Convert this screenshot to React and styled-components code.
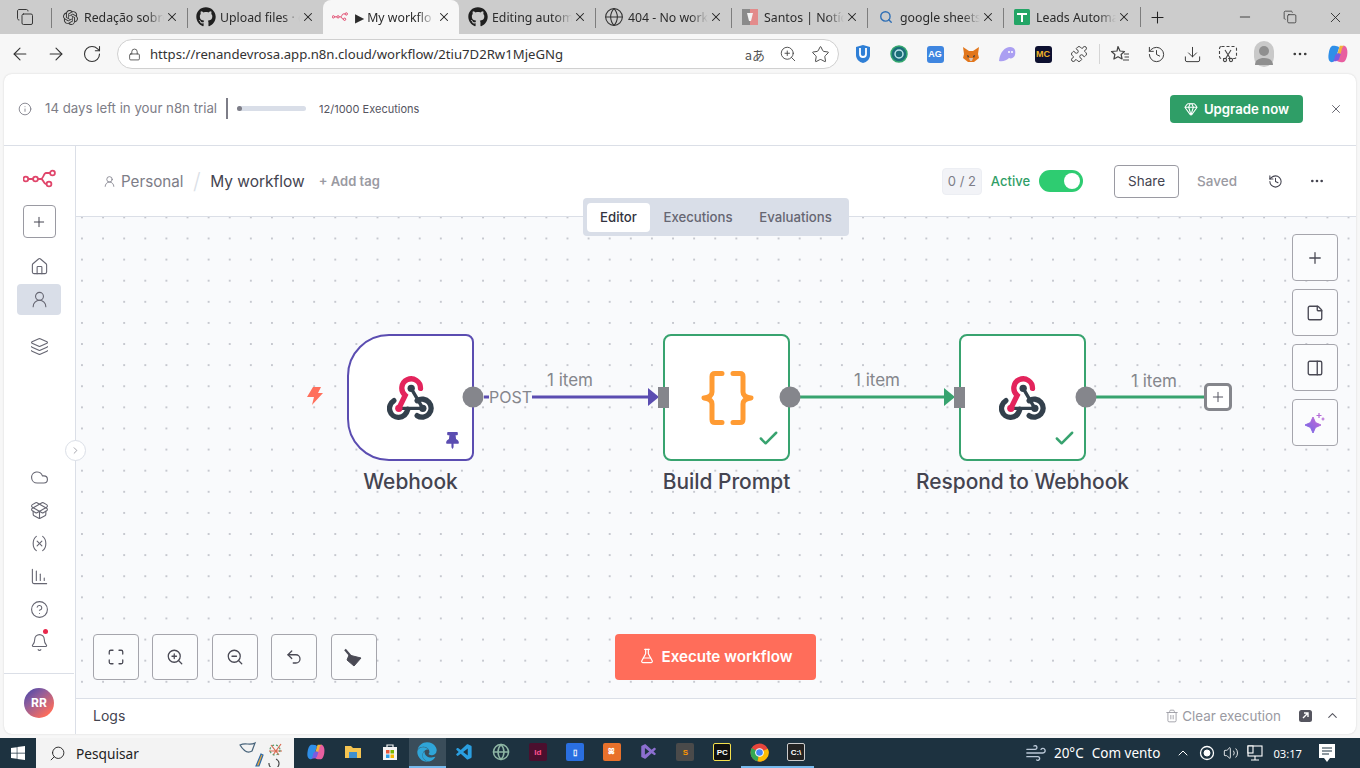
import styled, { createGlobalStyle } from 'styled-components';
import {
  ArrowLeft,
  ArrowRight,
  Bell,
  ChartColumnDecreasing,
  Check,
  ChevronRight,
  ChevronUp,
  CircleHelp,
  Cloud,
  Copy,
  Download,
  Ellipsis,
  FlaskConical,
  Gem,
  Globe,
  History,
  House,
  Info,
  Layers,
  Lock,
  Maximize,
  Minus,
  PackageOpen,
  PanelRight,
  Plus,
  Puzzle,
  RotateCw,
  Search,
  Star,
  StickyNote,
  Trash2,
  Undo2,
  UserRound,
  Variable,
  Volume2,
  Wind,
  X,
  ZoomIn,
  ZoomOut,
} from 'lucide-react';
import { FaEdge, FaGithub, FaThumbtack, FaWindows } from 'react-icons/fa';
import { SiOpenai } from 'react-icons/si';
import { VscVscode } from 'react-icons/vsc';

const GlobalStyle = createGlobalStyle`
  * {
    box-sizing: border-box;
  }

  html,
  body {
    margin: 0;
    padding: 0;
    overflow: hidden;
    background: #f7f7f7;
    font-family: Inter, "Liberation Sans", sans-serif;
  }
`;

const Screen = styled.div`
  width: 1360px;
  height: 768px;
  display: flex;
  flex-direction: column;
  overflow: hidden;
`;

/* browser chrome */

const TabStrip = styled.div`
  height: 34px;
  display: flex;
  align-items: stretch;
  background: #cccccc;
  font-family: 'Noto Sans', sans-serif;
  font-size: 12.3px;
  color: #2b2b2b;
`;

const WorkspaceCell = styled.div`
  width: 51px;
  display: flex;
  align-items: center;
  padding-left: 16px;
`;

const TabItem = styled.div`
  width: 136px;
  display: flex;
  align-items: center;
  padding-left: ${(p) => (p.$active ? '7px' : '9px')};
  position: relative;
  background: ${(p) => (p.$active ? '#f7f7f7' : 'transparent')};
  border-radius: ${(p) => (p.$active ? '8px 8px 0 0' : '0')};

  &::before {
    content: '';
    display: ${(p) => (p.$sep ? 'block' : 'none')};
    position: absolute;
    left: 0;
    top: 8px;
    height: 20px;
    width: 1px;
    background: #7d7d7d;
  }
`;

const TabFavicon = styled.span`
  width: 20px;
  height: 20px;
  flex: none;
  display: flex;
  align-items: center;
  justify-content: center;
`;

const TabTitle = styled.span`
  width: 80px;
  margin-left: ${(p) => (p.$active ? '5px' : '4px')};
  white-space: nowrap;
  mask-image: linear-gradient(to right, #000 78%, transparent 100%);
`;

const TabClose = styled.span`
  position: absolute;
  right: 8px;
  top: 10px;
  display: flex;
`;

const StripTail = styled.div`
  flex: 1;
  display: flex;
  align-items: center;
`;

const NewTab = styled.span`
  margin-left: 1px;
  padding-left: 7px;
  border-left: 1px solid #7d7d7d;
  height: 20px;
  display: flex;
  align-items: center;
`;

const WindowButtons = styled.div`
  margin-left: auto;
  display: flex;
  align-items: center;
  gap: 30px;
  padding-right: 16px;
`;

const AddressRow = styled.div`
  height: 40px;
  display: flex;
  align-items: center;
  background: #f7f7f7;
  padding-left: 10px;
`;

const NavIcons = styled.div`
  display: flex;
  gap: 16px;
`;

const UrlPill = styled.div`
  width: 722px;
  height: 30px;
  margin-left: 15px;
  display: flex;
  align-items: center;
  padding: 0 8px 0 10px;
  background: #ffffff;
  border: 1px solid #d0d0d0;
  border-radius: 15px;
  font-family: 'Noto Sans', sans-serif;
  font-size: 13.15px;
  color: #333333;
`;

const UrlText = styled.span`
  margin-left: 9px;
`;

const PillIcons = styled.div`
  margin-left: auto;
  display: flex;
  align-items: center;
  gap: 14px;
  color: #444444;
`;

const TranslateMark = styled.span`
  font-family: 'Noto Sans CJK JP', sans-serif;
  font-size: 13px;
  color: #555555;
`;

const ExtensionRow = styled.div`
  margin-left: 14px;
  display: flex;
  align-items: center;
  gap: 16px;
`;

const ExtSlot = styled.span`
  width: 20px;
  height: 20px;
  margin-left: ${(p) => p.$gap || 0}px;
  display: flex;
  align-items: center;
  justify-content: center;
`;

const ExtBadge = styled.span`
  width: 17px;
  height: 17px;
  display: flex;
  align-items: center;
  justify-content: center;
  border-radius: 3px;
  background: ${(p) => p.$bg};
  color: ${(p) => p.$fg};
  font-family: 'Liberation Sans', sans-serif;
  font-size: 9px;
  font-weight: 700;
`;

const ToolDivider = styled.span`
  width: 1px;
  height: 20px;
  background: #d5d5d5;
  margin: 0 -6px;
`;

const ProfileAvatar = styled.span`
  width: 22px;
  height: 26px;
  border-radius: 11px;
  background: #c9c9c9;
  display: flex;
  align-items: center;
  justify-content: center;
`;

/* n8n frame */

const Frame = styled.div`
  flex: 1;
  min-height: 0;
  margin: 0 4px 4px;
  display: flex;
  flex-direction: column;
  background: #ffffff;
  border-radius: 8px;
  overflow: hidden;
  box-shadow: 0 0 2px rgba(0, 0, 0, 0.16);
`;

const TrialBanner = styled.div`
  height: 72px;
  flex: none;
  display: flex;
  align-items: center;
  padding: 0 13px 2px 14px;
  border-bottom: 1px solid #dbdfe7;
  color: #7d7d87;
`;

const TrialText = styled.span`
  margin-left: 13px;
  padding-bottom: 2px;
  font-size: 13.25px;
`;

const TrialDivider = styled.span`
  width: 2px;
  height: 21px;
  margin: 0 9px;
  background: #7d7d87;
`;

const ProgressTrack = styled.div`
  width: 69px;
  height: 5px;
  border-radius: 3px;
  background: #d9dee8;
`;

const ProgressFill = styled.div`
  height: 100%;
  border-radius: 3px;
  background: #7d7d87;
`;

const ExecCount = styled.span`
  margin-left: 13px;
  font-size: 11px;
  color: #55555f;
`;

const UpgradeButton = styled.button`
  margin-left: auto;
  width: 133px;
  height: 28px;
  display: flex;
  align-items: center;
  justify-content: center;
  gap: 6px;
  border: none;
  border-radius: 4px;
  background: #2f9e67;
  color: #ffffff;
  font: 600 13.2px Inter, sans-serif;
`;

const BannerClose = styled.span`
  margin-left: 26px;
  display: flex;
  color: #55555f;
`;

const Workspace = styled.div`
  flex: 1;
  min-height: 0;
  display: flex;
`;

const Sidebar = styled.aside`
  width: 72px;
  flex: none;
  position: relative;
  display: flex;
  flex-direction: column;
  align-items: center;
  padding: 21px 1px 0 0;
  border-right: 1px solid #dbdfe7;
  color: #666672;
`;

const LogoSlot = styled.div`
  height: 24px;
  display: flex;
  align-items: center;
`;

const AddButton = styled.button`
  width: 33px;
  height: 33px;
  margin: 14px 0 12px;
  display: flex;
  align-items: center;
  justify-content: center;
  background: #ffffff;
  border: 1px solid #9a9aa2;
  border-radius: 4px;
  color: #444450;
  padding: 0;
`;

const NavItem = styled.div`
  width: 44px;
  height: ${(p) => (p.$active ? '31px' : '33px')};
  margin-top: ${(p) => p.$gap || 0}px;
  display: flex;
  align-items: center;
  justify-content: center;
  position: relative;
  border-radius: 4px;
  background: ${(p) => (p.$active ? '#d9dee8' : 'transparent')};
`;

const NotifyDot = styled.span`
  position: absolute;
  top: 3px;
  right: 13px;
  width: 5px;
  height: 5px;
  border-radius: 50%;
  background: #e8274b;
`;

const CollapseToggle = styled.span`
  position: absolute;
  top: 294px;
  right: -11px;
  width: 21px;
  height: 21px;
  z-index: 3;
  display: flex;
  align-items: center;
  justify-content: center;
  border-radius: 50%;
  border: 1px solid #dbdfe7;
  background: #ffffff;
  color: #7d7d87;
`;

const SideLower = styled.div`
  margin-top: auto;
  width: 100%;
  display: flex;
  flex-direction: column;
  align-items: center;
`;

const AvatarBlock = styled.div`
  width: 100%;
  height: 61px;
  margin-top: 14px;
  display: flex;
  align-items: center;
  justify-content: center;
  padding-bottom: 3px;
  border-top: 1px solid #dbdfe7;
`;

const UserAvatar = styled.span`
  width: 30px;
  height: 30px;
  border-radius: 50%;
  display: flex;
  align-items: center;
  justify-content: center;
  background: linear-gradient(140deg, #4b46a8 5%, #8e5d9c 35%, #ff6d5a 85%);
  color: #ffffff;
  font-size: 12px;
  font-weight: 700;
`;

const Main = styled.div`
  flex: 1;
  min-width: 0;
  position: relative;
  display: flex;
  flex-direction: column;
`;

const HeaderBar = styled.header`
  height: 71px;
  flex: none;
  display: flex;
  align-items: center;
  padding: 0 31px 0 27px;
  border-bottom: 1px solid #dbdfe7;
`;

const ProjectLink = styled.span`
  display: flex;
  align-items: center;
  gap: 5px;
  font-size: 15.2px;
  color: #7d7d87;
`;

const CrumbSlash = styled.span`
  margin: 0 9.5px;
  font-size: 22px;
  font-weight: 300;
  color: #dbdfe7;
`;

const WorkflowName = styled.span`
  font-size: 15.5px;
  color: #444450;
`;

const AddTag = styled.span`
  margin-left: 14px;
  font-size: 13px;
  font-weight: 600;
  color: #9a9aa2;
`;

const HeaderRight = styled.div`
  margin-left: auto;
  display: flex;
  align-items: center;
`;

const Counter = styled.span`
  width: 40px;
  height: 27px;
  display: flex;
  align-items: center;
  justify-content: center;
  border: 1px solid #eceef3;
  border-radius: 4px;
  background: #f2f3f7;
  font-size: 13px;
  color: #7d7d87;
`;

const ActiveLabel = styled.span`
  margin-left: 9px;
  font-size: 13px;
  font-weight: 500;
  color: #2f9e67;
`;

const Toggle = styled.span`
  width: 44px;
  height: 22px;
  margin-left: 9px;
  display: flex;
  align-items: center;
  justify-content: flex-end;
  padding-right: 3px;
  border-radius: 11px;
  background: #2ecc71;

  &::after {
    content: '';
    width: 16px;
    height: 16px;
    border-radius: 50%;
    background: #ffffff;
  }
`;

const ShareButton = styled.button`
  width: 65px;
  height: 33px;
  margin-left: 31px;
  background: #ffffff;
  border: 1px solid #9a9aa2;
  border-radius: 4px;
  font: 400 13.5px Inter, sans-serif;
  color: #444450;
  padding: 0;
`;

const SavedLabel = styled.span`
  margin-left: 18px;
  font-size: 13.5px;
  font-weight: 500;
  color: #9a9aa2;
`;

const HeaderIcon = styled.span`
  margin-left: ${(p) => p.$gap}px;
  display: flex;
  color: #444450;
`;

const ViewTabs = styled.nav`
  position: absolute;
  top: 52px;
  left: 507px;
  width: 266px;
  height: 38px;
  z-index: 3;
  display: flex;
  align-items: center;
  padding: 0 4px;
  border-radius: 4px;
  background: #d9dee8;
  font-size: 13.2px;
  font-weight: 500;
  color: #666672;
`;

const ViewTab = styled.span`
  height: 29px;
  width: ${(p) => p.$w}px;
  display: flex;
  align-items: center;
  justify-content: center;
  border-radius: 4px;
  background: ${(p) => (p.$active ? '#ffffff' : 'transparent')};
  color: ${(p) => (p.$active ? '#333340' : 'inherit')};
`;

const Canvas = styled.section`
  flex: 1;
  min-height: 0;
  position: relative;
  background-color: #f9fafc;
  background-image: radial-gradient(circle, #c6c8cf 0.7px, transparent 1px);
  background-size: 21.12px 21.12px;
  background-position: -4.6px -10.2px;
`;

const EdgeLayer = styled.svg`
  position: absolute;
  inset: 0;
  z-index: 2;
  pointer-events: none;
`;

const NodeBox = styled.div`
  position: absolute;
  left: ${(p) => p.$x}px;
  top: 117px;
  width: 127px;
  height: 127px;
  display: flex;
  align-items: center;
  justify-content: center;
  background: #ffffff;
  border: 2px solid ${(p) => p.$color};
  border-radius: ${(p) => (p.$trigger ? '42px 8px 8px 42px' : '8px')};
`;

const NodeLabel = styled.span`
  position: absolute;
  top: 133px;
  left: 50%;
  transform: translateX(-50%);
  white-space: nowrap;
  font-size: 20.9px;
  font-weight: 500;
  color: #444450;
`;

const NodeStatus = styled.span`
  position: absolute;
  right: ${(p) => p.$right}px;
  bottom: ${(p) => p.$bottom}px;
  display: flex;
  color: ${(p) => p.$color};
`;

const BoltMark = styled.span`
  position: absolute;
  left: 229px;
  top: 169px;
  display: flex;
`;

const EdgeLabel = styled.span`
  position: absolute;
  left: ${(p) => p.$x}px;
  top: ${(p) => p.$y}px;
  z-index: 2;
  font-size: ${(p) => p.$size}px;
  color: #85868c;
  line-height: 20px;
`;

const PlusHandle = styled.span`
  position: absolute;
  left: 1128px;
  top: 166px;
  z-index: 3;
  width: 28px;
  height: 28px;
  display: flex;
  align-items: center;
  justify-content: center;
  background: #ffffff;
  border: 3px solid #85868c;
  border-radius: 5px;
  color: #555560;
`;

const SideTools = styled.div`
  position: absolute;
  top: 17px;
  right: 18px;
  z-index: 3;
  display: flex;
  flex-direction: column;
  gap: 8px;
`;

const BottomTools = styled.div`
  position: absolute;
  left: 17px;
  bottom: 18px;
  z-index: 3;
  display: flex;
  gap: 13.4px;
`;

const ToolButton = styled.button`
  width: 46px;
  height: 46px;
  padding: 0;
  display: flex;
  align-items: center;
  justify-content: center;
  background: #fbfcfd;
  border: 1px solid #a5a5ac;
  border-radius: 4px;
  color: #4a4a55;
`;

const SideButton = styled(ToolButton)`
  height: 47px;
`;

const ExecuteButton = styled.button`
  position: absolute;
  left: 539px;
  bottom: 18px;
  z-index: 3;
  width: 201px;
  height: 46px;
  display: flex;
  align-items: center;
  justify-content: center;
  gap: 7px;
  padding: 0 0 2px;
  border: none;
  border-radius: 4px;
  background: #ff6d5a;
  color: #ffffff;
  font: 600 15.2px Inter, sans-serif;
`;

const LogsBar = styled.footer`
  height: 36px;
  flex: none;
  display: flex;
  align-items: center;
  padding: 0 16px 2px 17px;
  border-top: 1px solid #dbdfe7;
  font-size: 14px;
  color: #444450;
`;

const ClearExec = styled.span`
  margin-left: auto;
  display: flex;
  align-items: center;
  gap: 3px;
  font-size: 13.4px;
  color: #9a9aa2;
`;

const LogsIcon = styled.span`
  margin-left: ${(p) => p.$gap}px;
  display: flex;
  color: #55555f;
`;

/* windows taskbar */

const Taskbar = styled.div`
  height: 30px;
  flex: none;
  display: flex;
  align-items: center;
  background: #1d3240;
  font-family: 'Noto Sans', sans-serif;
  color: #ffffff;
`;

const StartCell = styled.div`
  width: 36px;
  display: flex;
  justify-content: center;
`;

const SearchBox = styled.div`
  width: 258px;
  height: 30px;
  display: flex;
  align-items: center;
  gap: 10px;
  padding-left: 13px;
  background: #f3f3f3;
  color: #222222;
  font-size: 13.7px;
`;

const SearchDoodle = styled.span`
  margin-left: auto;
  padding-right: 5px;
  display: flex;
`;

const TaskIcons = styled.div`
  margin-left: 4px;
  display: flex;
`;

const TaskSlot = styled.span`
  width: 36.9px;
  height: 30px;
  display: flex;
  align-items: center;
  justify-content: center;
  background: ${(p) => (p.$active ? '#3a4d5a' : 'transparent')};
  border-bottom: 2px solid ${(p) => (p.$running ? '#76b9ed' : 'transparent')};
`;

const TaskBadge = styled.span`
  width: 18px;
  height: 18px;
  display: flex;
  align-items: center;
  justify-content: center;
  background: ${(p) => p.$bg};
  color: ${(p) => p.$fg};
  border: ${(p) => (p.$line ? `1px solid ${p.$line}` : 'none')};
  border-radius: 2px;
  font-family: 'Liberation Sans', sans-serif;
  font-size: 8px;
  font-weight: 700;
`;

const Tray = styled.div`
  margin-left: auto;
  display: flex;
  align-items: center;
  padding-right: 24px;
`;

const TrayText = styled.span`
  margin-left: ${(p) => p.$gap}px;
  font-size: ${(p) => p.$size || 13.5}px;
`;

const TrayIcon = styled.span`
  margin-left: ${(p) => p.$gap}px;
  display: flex;
`;

/* drawings */

function N8nLogo({ size = 33, color = '#e0466b', stroke = 1.8 }) {
  return (
    <svg width={size} height={(size * 20) / 33} viewBox="0 0 33 20" fill="none" stroke={color} strokeWidth={stroke}>
      <circle cx="2.800" cy="10" r="2.400" />
      <circle cx="12.500" cy="10" r="2.400" />
      <circle cx="29.500" cy="4" r="2.400" />
      <circle cx="26" cy="15" r="2.400" />
      <path d="M5.200 10h4.900M14.900 10h3.100c2.500 0 2.500-6 5-6h4.100M18 10c2.500 0 2.500 5 5 5h.6" />
    </svg>
  );
}

function WebhookLogo() {
  return (
    <svg width="47" height="45" viewBox="50 45 140 135" fill="none" strokeLinecap="round">
      <path d="M122 85L157 145H85" stroke="#33404c" strokeWidth="10" />
      <path d="M70 122A27 27 0 0 0 85 172C100 172 108 162 112 148" stroke="#33404c" strokeWidth="16" />
      <path d="M140 122A27 27 0 1 1 140 167" stroke="#33404c" strokeWidth="16" />
      <path d="M85 145L104 106A28 28 0 1 1 150 85" stroke="#e3245c" strokeWidth="16" />
      <circle cx="122" cy="85" r="11" fill="#33404c" />
      <circle cx="157" cy="145" r="11" fill="#33404c" />
      <circle cx="85" cy="145" r="11" fill="#e3245c" />
    </svg>
  );
}

function BracesLogo() {
  return (
    <svg width="54" height="54" viewBox="0 0 54 54" fill="none" stroke="#ff9b33" strokeWidth="5" strokeLinecap="round" strokeLinejoin="round">
      <path d="M22 2.500H15Q12 2.500 12 5.500V21Q12 26 4 27Q12 28 12 33V48.500Q12 51.500 15 51.500H22" />
      <path d="M33 2.500H40Q43 2.500 43 5.500V21Q43 26 51 27Q43 28 43 33V48.500Q43 51.500 40 51.500H33" />
    </svg>
  );
}

function Bolt() {
  return (
    <svg width="20" height="20" viewBox="0 0 20 20" fill="#ff6f5c">
      <path d="M8 1h8l-3 6h5L7 19l2-8H2z" />
    </svg>
  );
}

function Broom() {
  return (
    <svg width="19" height="19" viewBox="0 0 19 19" fill="#4a4a55" stroke="#4a4a55" strokeLinejoin="round">
      <path d="M1 1.500L7 8.500" strokeWidth="2.200" />
      <path d="M5 7l12 3-7 8-7-6z" strokeWidth="1" />
    </svg>
  );
}

function Sparkle() {
  return (
    <svg width="22" height="22" viewBox="0 0 22 22">
      <defs>
        <linearGradient id="sparkFill" x1="0" y1="1" x2="1" y2="0">
          <stop offset="0" stopColor="#6f67e8" />
          <stop offset="1" stopColor="#c86ad4" />
        </linearGradient>
      </defs>
      <path
        d="M9 5L11.500 10.500L17 13L11.500 15.500L9 21L6.500 15.500L1 13L6.500 10.500Z"
        fill="url(#sparkFill)"
        stroke="url(#sparkFill)"
        strokeLinejoin="round"
      />
      <path d="M15 1v5M12.500 3.500h5M19 5.500v3M17.500 7h3" stroke="#b56ad8" strokeWidth="1.200" />
    </svg>
  );
}

function PopOut() {
  return (
    <svg width="15" height="15" viewBox="0 0 15 15">
      <rect x="1" y="2" width="13" height="12" rx="2.500" fill="#55555f" />
      <path d="M5 10l5-5M6 5h4v4" fill="none" stroke="#ffffff" strokeWidth="1.400" />
    </svg>
  );
}

function CopilotMark({ size = 22 }) {
  return (
    <svg width={size} height={size} viewBox="0 0 22 22">
      <path d="M6 2c-3 0-4 3-5 7-1 5-1 10 3 11 3 0 4-3 5-6l3-9C13 3 10 2 6 2z" fill="#2f8fe8" />
      <path d="M16 20c3 0 4-3 5-7 1-5 0-10-3-11-3 0-4 3-5 6l-3 9c-1 2 2 3 6 3z" fill="#e85fa0" />
      <path d="M12 5l1-3h5c-2 1-3 3-3 5l-2 6-4 3z" fill="#f2b13d" />
      <path d="M8 12l3-2 3 1-2 6-3 2H5c2-1 2-3 3-7z" fill="#7b5be0" />
    </svg>
  );
}

function FoxMark() {
  return (
    <svg width="18" height="17" viewBox="0 0 18 17">
      <path d="M1 1l6 4h4l6-4-1 7 1 4-5 4H6l-5-4 1-4z" fill="#e2761b" />
      <path d="M5 9l2 1-1 2zM13 9l-2 1 1 2z" fill="#233447" />
      <path d="M7 12h4l-1 3H8z" fill="#d7c1b3" />
    </svg>
  );
}

function GhostMark() {
  return (
    <svg width="20" height="18" viewBox="0 0 20 18">
      <path d="M2 16C3 7 8 2 13 2s6 4 5 8c-1 3-4 4-6 3-2 2-6 4-10 3z" fill="#ab9ff2" />
      <circle cx="12" cy="7" r="1" fill="#ffffff" />
      <circle cx="15" cy="7" r="1" fill="#ffffff" />
    </svg>
  );
}

function ShieldMark() {
  return (
    <svg width="16" height="20" viewBox="0 0 16 20">
      <path d="M1 3l7-2 7 2v8c0 4-3 7-7 8-4-1-7-4-7-8z" fill="#2f7fd6" />
      <path d="M5 4v6c0 2 1 3 3 3s3-1 3-3V4" fill="none" stroke="#ffffff" strokeWidth="1.800" />
    </svg>
  );
}

function RingMark() {
  return (
    <svg width="18" height="20" viewBox="0 0 18 20">
      <circle cx="9" cy="10" r="8" fill="#1b6e78" stroke="#35a86f" strokeWidth="1.500" />
      <circle cx="9" cy="10" r="4" fill="none" stroke="#b9e3ea" strokeWidth="1.500" />
    </svg>
  );
}

function SheetsMark() {
  return (
    <svg width="16" height="16" viewBox="0 0 16 16">
      <rect width="16" height="16" rx="1.500" fill="#23a566" />
      <path d="M3 5h10M8 5v8" stroke="#ffffff" strokeWidth="2" />
    </svg>
  );
}

function SantosMark() {
  return (
    <svg width="16" height="16" viewBox="0 0 16 16">
      <rect width="8" height="16" fill="#8a8a8a" />
      <rect x="8" width="8" height="16" fill="#e38b8b" />
      <path d="M5 4h6l-2 8H7z" fill="#f3f3f3" />
    </svg>
  );
}

function ScreenshotTool() {
  return (
    <svg width="20" height="18" viewBox="0 0 20 18" fill="none" stroke="#444444" strokeWidth="1.100">
      <rect x="1.500" y="1.500" width="17" height="12" rx="2" strokeDasharray="3 2" />
      <path d="M7 5l5 8M13 5l-5 8" />
      <circle cx="7" cy="15" r="1.600" />
      <circle cx="13" cy="15" r="1.600" />
    </svg>
  );
}

function FavoritesIcon() {
  return (
    <svg width="20" height="20" viewBox="0 0 20 20" fill="none" stroke="#444444" strokeWidth="1.200" strokeLinejoin="round">
      <path d="M8 2.500l2 4.500 4.500.5-3.400 3 1 4.500L8 12.700 3.900 15l1-4.500-3.400-3L7 7z" />
      <path d="M14 10h5M14.500 13h4.500M13 16h6" />
    </svg>
  );
}

function PersonGlyph() {
  return (
    <svg width="20" height="24" viewBox="0 0 20 24" fill="#8f8f8f">
      <circle cx="10" cy="9" r="5" />
      <path d="M1 23c0-5 4-7 9-7s9 2 9 7z" />
    </svg>
  );
}

function Doodle() {
  return (
    <svg width="52" height="28" viewBox="0 0 52 28" fill="none" strokeWidth="1.200">
      <path d="M3 6c6-3 9 1 15-2l-3 8c-5 3-9-1-12-6z" stroke="#47637a" />
      <path d="M19 27l5-12 2 1-4 11z" fill="#e6a53a" stroke="#2f6aa8" />
      <path d="M34 6l8 10M44 5l-8 11M32 12h13" stroke="#d9694f" />
      <circle cx="38" cy="11" r="5" stroke="#5a9a6b" strokeDasharray="2 2" />
      <path d="M32 24a5 5 0 1 0 7-4" stroke="#444444" />
    </svg>
  );
}

function NotesGlyph() {
  return (
    <svg width="18" height="21" viewBox="0 0 18 21">
      <path d="M1 1h16v14h-5l-3 4-3-4H1z" fill="#ffffff" />
      <path d="M4 5h10M4 8h10M4 11h7" stroke="#1d3240" strokeWidth="1.200" />
    </svg>
  );
}

function FolderMark() {
  return (
    <svg width="18" height="16" viewBox="0 0 18 16">
      <path d="M1 2h6l2 2h8v10H1z" fill="#f5c451" />
      <path d="M5 8h8v6H5z" fill="#3f8fd0" />
    </svg>
  );
}

function StoreMark() {
  return (
    <svg width="16" height="18" viewBox="0 0 16 18">
      <path d="M1 4h14v13H1z" fill="#f4f4f4" />
      <path d="M5 4V2h6v2" fill="none" stroke="#f4f4f4" strokeWidth="1.200" />
      <rect x="4" y="7" width="3.500" height="3.500" fill="#e8563a" />
      <rect x="8.500" y="7" width="3.500" height="3.500" fill="#7ab800" />
      <rect x="4" y="11.500" width="3.500" height="3.500" fill="#2f9fe8" />
      <rect x="8.500" y="11.500" width="3.500" height="3.500" fill="#f5b900" />
    </svg>
  );
}

function ChromeMark() {
  return (
    <svg width="19" height="19" viewBox="0 0 20 20">
      <circle cx="10" cy="10" r="9.500" fill="#e8453c" />
      <path d="M10 10L1.800 5.200A9.500 9.500 0 0 0 8 19.300z" fill="#34a853" />
      <path d="M10 10l-2 9.300A9.500 9.500 0 0 0 18.800 6z" fill="#fbbc05" />
      <circle cx="10" cy="10" r="4.600" fill="#ffffff" />
      <circle cx="10" cy="10" r="3.500" fill="#4285f4" />
    </svg>
  );
}

const browserTabs = [
  { title: 'Redação sobre', favicon: <SiOpenai size={15} color="#333333" />, sep: true },
  { title: 'Upload files · c', favicon: <FaGithub size={20} color="#1f1f1f" />, sep: true },
  { title: '▶ My workflo', favicon: <N8nLogo size={16} stroke={2} />, active: true },
  { title: 'Editing autom', favicon: <FaGithub size={20} color="#1f1f1f" /> },
  { title: '404 - No work', favicon: <Globe size={20} strokeWidth={1.300} color="#333333" />, sep: true },
  { title: 'Santos | Notíci', favicon: <SantosMark />, sep: true },
  { title: 'google sheets', favicon: <Search size={14} strokeWidth={2.400} color="#2f6fb5" />, sep: true },
  { title: 'Leads Automa', favicon: <SheetsMark />, sep: true },
];

const navTop = [
  { icon: House, key: 'home' },
  { icon: UserRound, key: 'personal', active: true, gap: 1 },
  { icon: Layers, key: 'layers', gap: 15 },
];

const navBottom = [Cloud, PackageOpen, Variable, ChartColumnDecreasing, CircleHelp];

const edgeLines = [
  { d: 'M484 397H489M532 397H650', color: '#5b4db1', head: 'M648 388L659 397L648 406Z', inX: 658 },
  { d: 'M800 397H946', color: '#38a36f', head: 'M944 388L955 397L944 406Z', inX: 954 },
  { d: 'M1096 397H1206', color: '#38a36f' },
];

const taskItems = [
  { node: <CopilotMark size={18} /> },
  { node: <FolderMark /> },
  { node: <StoreMark /> },
  { node: <FaEdge size={20} color="#2fa5d8" />, active: true, running: true },
  { node: <VscVscode size={19} color="#2a9fe0" /> },
  { node: <Globe size={18} color="#8fb7a5" strokeWidth={2} /> },
  { node: <TaskBadge $bg="#4b0f2e" $fg="#ff4f8f">Id</TaskBadge> },
  { node: <TaskBadge $bg="#2a6fe0" $fg="#ffffff">▯</TaskBadge> },
  { node: <TaskBadge $bg="#e8712b" $fg="#ffffff">ꕤ</TaskBadge> },
  { node: <VscVscode size={18} color="#8c6fd0" style={{ transform: 'scaleX(-1)' }} /> },
  { node: <TaskBadge $bg="#4a4a4a" $fg="#ff9800">S</TaskBadge> },
  { node: <TaskBadge $bg="#111111" $fg="#ffffff" $line="#f4e04d">PC</TaskBadge> },
  { node: <ChromeMark />, running: true },
  { node: <TaskBadge $bg="#222222" $fg="#ffffff" $line="#cccccc">C:\</TaskBadge>, running: true },
];

export default function App() {
  return (
    <Screen>
      <GlobalStyle />

      <TabStrip>
        <WorkspaceCell>
          <Copy size={18} strokeWidth={1.300} color="#333333" />
        </WorkspaceCell>
        {browserTabs.map((tab) => (
          <TabItem key={tab.title} $active={tab.active} $sep={tab.sep}>
            <TabFavicon>{tab.favicon}</TabFavicon>
            <TabTitle $active={tab.active}>{tab.title}</TabTitle>
            <TabClose>
              <X size={14} strokeWidth={1.800} color="#222222" />
            </TabClose>
          </TabItem>
        ))}
        <StripTail>
          <NewTab>
            <Plus size={19} strokeWidth={1.300} color="#222222" />
          </NewTab>
          <WindowButtons>
            <Minus size={16} strokeWidth={1.200} color="#222222" />
            <Copy size={14} strokeWidth={1.200} color="#222222" />
            <X size={17} strokeWidth={1.200} color="#222222" />
          </WindowButtons>
        </StripTail>
      </TabStrip>

      <AddressRow>
        <NavIcons>
          <ArrowLeft size={20} strokeWidth={1.300} color="#333333" />
          <ArrowRight size={20} strokeWidth={1.300} color="#333333" />
          <RotateCw size={20} strokeWidth={1.300} color="#333333" />
        </NavIcons>
        <UrlPill>
          <Lock size={13} strokeWidth={1.400} color="#333333" />
          <UrlText>https://renandevrosa.app.n8n.cloud/workflow/2tiu7D2Rw1MjeGNg</UrlText>
          <PillIcons>
            <TranslateMark>aあ</TranslateMark>
            <ZoomIn size={18} strokeWidth={1.200} />
            <Star size={19} strokeWidth={1.200} />
          </PillIcons>
        </UrlPill>
        <ExtensionRow>
          <ExtSlot><ShieldMark /></ExtSlot>
          <ExtSlot><RingMark /></ExtSlot>
          <ExtSlot><ExtBadge $bg="#3f86e0" $fg="#ffffff">AG</ExtBadge></ExtSlot>
          <ExtSlot><FoxMark /></ExtSlot>
          <ExtSlot><GhostMark /></ExtSlot>
          <ExtSlot><ExtBadge $bg="#0d1030" $fg="#f0b429">MC</ExtBadge></ExtSlot>
          <ExtSlot><Puzzle size={18} strokeWidth={1.200} color="#333333" /></ExtSlot>
          <ToolDivider />
          <ExtSlot><FavoritesIcon /></ExtSlot>
          <ExtSlot><History size={19} strokeWidth={1.200} color="#333333" /></ExtSlot>
          <ExtSlot><Download size={19} strokeWidth={1.200} color="#333333" /></ExtSlot>
          <ExtSlot><ScreenshotTool /></ExtSlot>
          <ExtSlot><ProfileAvatar><PersonGlyph /></ProfileAvatar></ExtSlot>
          <ExtSlot><Ellipsis size={18} strokeWidth={1.500} color="#333333" /></ExtSlot>
          <ExtSlot $gap={2}><CopilotMark /></ExtSlot>
        </ExtensionRow>
      </AddressRow>

      <Frame>
        <TrialBanner>
          <Info size={14} strokeWidth={1.500} />
          <TrialText>14 days left in your n8n trial</TrialText>
          <TrialDivider />
          <ProgressTrack>
            <ProgressFill style={{ width: `${(12 / 1000) * 100 + 6}%` }} />
          </ProgressTrack>
          <ExecCount>12/1000 Executions</ExecCount>
          <UpgradeButton>
            <Gem size={14} strokeWidth={1.800} />
            Upgrade now
          </UpgradeButton>
          <BannerClose>
            <X size={14} strokeWidth={1.500} />
          </BannerClose>
        </TrialBanner>

        <Workspace>
          <Sidebar>
            <LogoSlot>
              <N8nLogo />
            </LogoSlot>
            <AddButton>
              <Plus size={16} strokeWidth={1.500} />
            </AddButton>
            {navTop.map(({ icon: Icon, key, active, gap }) => (
              <NavItem key={key} $active={active} $gap={gap}>
                <Icon size={19} strokeWidth={1.400} />
              </NavItem>
            ))}
            <CollapseToggle>
              <ChevronRight size={11} strokeWidth={1.500} />
            </CollapseToggle>
            <SideLower>
              {navBottom.map((Icon, i) => (
                <NavItem key={i}>
                  <Icon size={19} strokeWidth={1.400} />
                </NavItem>
              ))}
              <NavItem>
                <Bell size={19} strokeWidth={1.400} />
                <NotifyDot />
              </NavItem>
              <AvatarBlock>
                <UserAvatar>RR</UserAvatar>
              </AvatarBlock>
            </SideLower>
          </Sidebar>

          <Main>
            <HeaderBar>
              <ProjectLink>
                <UserRound size={13} strokeWidth={1.500} />
                Personal
              </ProjectLink>
              <CrumbSlash>/</CrumbSlash>
              <WorkflowName>My workflow</WorkflowName>
              <AddTag>+ Add tag</AddTag>
              <HeaderRight>
                <Counter>0 / 2</Counter>
                <ActiveLabel>Active</ActiveLabel>
                <Toggle />
                <ShareButton>Share</ShareButton>
                <SavedLabel>Saved</SavedLabel>
                <HeaderIcon $gap={31}>
                  <History size={15} strokeWidth={1.700} />
                </HeaderIcon>
                <HeaderIcon $gap={26}>
                  <Ellipsis size={16} strokeWidth={2} />
                </HeaderIcon>
              </HeaderRight>
            </HeaderBar>

            <ViewTabs>
              <ViewTab $active $w={63}>Editor</ViewTab>
              <ViewTab $w={96}>Executions</ViewTab>
              <ViewTab $w={99}>Evaluations</ViewTab>
            </ViewTabs>

            <Canvas>
              <BoltMark><Bolt /></BoltMark>

              <NodeBox $x={271} $trigger $color="#5b4db1">
                <WebhookLogo />
                <NodeStatus $right={11} $bottom={10} $color="#5b4db1">
                  <FaThumbtack size={17} />
                </NodeStatus>
                <NodeLabel>Webhook</NodeLabel>
              </NodeBox>

              <NodeBox $x={587} $color="#38a36f">
                <BracesLogo />
                <NodeStatus $right={8} $bottom={9} $color="#38a36f">
                  <Check size={23} strokeWidth={2.600} />
                </NodeStatus>
                <NodeLabel>Build Prompt</NodeLabel>
              </NodeBox>

              <NodeBox $x={883} $color="#38a36f">
                <WebhookLogo />
                <NodeStatus $right={8} $bottom={9} $color="#38a36f">
                  <Check size={23} strokeWidth={2.600} />
                </NodeStatus>
                <NodeLabel>Respond to Webhook</NodeLabel>
              </NodeBox>

              <EdgeLayer width="1280" height="481" viewBox="76 217 1280 481">
                {edgeLines.map((edge) => (
                  <g key={edge.d}>
                    <path d={edge.d} stroke={edge.color} strokeWidth="3" fill="none" />
                    {edge.head && <path d={edge.head} fill={edge.color} />}
                    {edge.inX && <rect x={edge.inX} y="387" width="11" height="21" fill="#85868c" />}
                  </g>
                ))}
                <circle cx="473" cy="397" r="10.500" fill="#85868c" />
                <circle cx="790" cy="397" r="10.500" fill="#85868c" />
                <circle cx="1086" cy="397" r="10.500" fill="#85868c" />
              </EdgeLayer>

              <EdgeLabel $x={413} $y={170} $size={16}>POST</EdgeLabel>
              <EdgeLabel $x={471} $y={153} $size={17}>1 item</EdgeLabel>
              <EdgeLabel $x={778} $y={153} $size={17}>1 item</EdgeLabel>
              <EdgeLabel $x={1055} $y={154} $size={17}>1 item</EdgeLabel>
              <PlusHandle>
                <Plus size={16} strokeWidth={1.500} />
              </PlusHandle>

              <SideTools>
                <SideButton><Plus size={18} strokeWidth={1.700} /></SideButton>
                <SideButton><StickyNote size={18} strokeWidth={1.800} /></SideButton>
                <SideButton><PanelRight size={18} strokeWidth={1.800} /></SideButton>
                <SideButton><Sparkle /></SideButton>
              </SideTools>

              <BottomTools>
                <ToolButton><Maximize size={18} strokeWidth={1.700} /></ToolButton>
                <ToolButton><ZoomIn size={18} strokeWidth={1.700} /></ToolButton>
                <ToolButton><ZoomOut size={18} strokeWidth={1.700} /></ToolButton>
                <ToolButton><Undo2 size={18} strokeWidth={1.700} /></ToolButton>
                <ToolButton><Broom /></ToolButton>
              </BottomTools>

              <ExecuteButton>
                <FlaskConical size={16} strokeWidth={1.800} />
                Execute workflow
              </ExecuteButton>
            </Canvas>

            <LogsBar>
              Logs
              <ClearExec>
                <Trash2 size={14} strokeWidth={1.500} />
                Clear execution
              </ClearExec>
              <LogsIcon $gap={17}>
                <PopOut />
              </LogsIcon>
              <LogsIcon $gap={12}>
                <ChevronUp size={15} strokeWidth={1.700} />
              </LogsIcon>
            </LogsBar>
          </Main>
        </Workspace>
      </Frame>

      <Taskbar>
        <StartCell>
          <FaWindows size={16} />
        </StartCell>
        <SearchBox>
          <Search size={17} strokeWidth={1.300} style={{ transform: 'scaleX(-1)' }} />
          Pesquisar
          <SearchDoodle><Doodle /></SearchDoodle>
        </SearchBox>
        <TaskIcons>
          {taskItems.map((item, i) => (
            <TaskSlot key={i} $active={item.active} $running={item.running}>
              {item.node}
            </TaskSlot>
          ))}
        </TaskIcons>
        <Tray>
          <Wind size={22} strokeWidth={1.500} color="#b9c7d6" />
          <TrayText $gap={7}>20°C</TrayText>
          <TrayText $gap={8}>Com vento</TrayText>
          <TrayIcon $gap={15}><ChevronUp size={16} strokeWidth={1.500} /></TrayIcon>
          <TrayIcon $gap={8}>
            <svg width="16" height="16" viewBox="0 0 16 16" fill="none" stroke="#ffffff">
              <circle cx="8" cy="8" r="6.500" strokeWidth="1.300" />
              <circle cx="8" cy="8" r="3" fill="#ffffff" />
            </svg>
          </TrayIcon>
          <TrayIcon $gap={8}><Volume2 size={16} strokeWidth={1.300} /></TrayIcon>
          <TrayIcon $gap={8}>
            <svg width="16" height="16" viewBox="0 0 16 16" fill="none" stroke="#ffffff" strokeWidth="1.100">
              <rect x="1" y="1" width="14" height="10" />
              <rect x="1" y="1" width="5" height="7" fill="#1d3240" />
              <path d="M8 11v4M4 15h8" />
            </svg>
          </TrayIcon>
          <TrayText $gap={10} $size={11.2}>03:17</TrayText>
          <TrayIcon $gap={16}><NotesGlyph /></TrayIcon>
        </Tray>
      </Taskbar>
    </Screen>
  );
}
